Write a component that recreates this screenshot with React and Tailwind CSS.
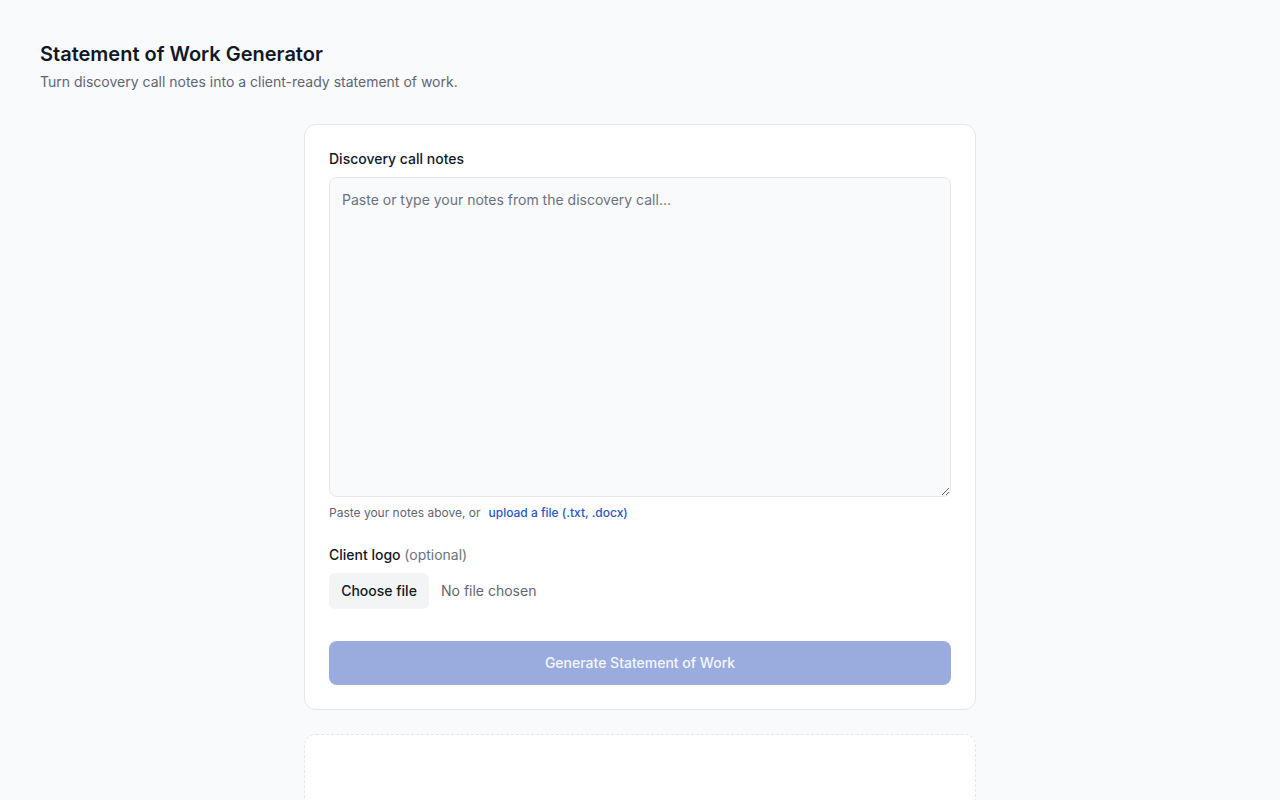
export default function App() {
  return (
    <div
      className="min-h-screen bg-[#f9fafc] px-10 pt-10 pb-10 text-[#111827]"
      style={{ fontFamily: "Inter, 'Noto Sans', sans-serif" }}
    >
      <header>
        <h1 className="text-xl font-semibold leading-7 text-[#111827]">Statement of Work Generator</h1>
        <p className="mt-1 text-sm leading-5 text-[#5f6673]">
          Turn discovery call notes into a client-ready statement of work.
        </p>
      </header>

      <main className="mx-auto mt-8 flex w-[672px] flex-col gap-6">
        <section className="rounded-xl border border-[#e5e7eb] bg-white p-6">
          <label className="block text-sm font-medium leading-5 text-[#111827]">Discovery call notes</label>
          <textarea
            className="mt-2 block h-80 w-full resize-y rounded-lg border border-[#e5e7eb] bg-[#f9fafc] px-3 py-3 text-sm leading-5 text-[#111827] placeholder:text-[#6b7280] outline-none"
            placeholder="Paste or type your notes from the discovery call..."
          />
          <p className="mt-2 text-xs leading-4 text-[#5f6673]">
            Paste your notes above, or
            <button className="ml-2 text-xs font-medium text-[#2a55c8]">upload a file (.txt, .docx)</button>
          </p>

          <label className="mt-6 block text-sm font-medium leading-5 text-[#111827]">
            Client logo <span className="font-normal text-[#6b7280]">(optional)</span>
          </label>
          <div className="mt-2 flex items-center gap-3">
            <span className="flex h-9 w-[100px] items-center justify-center rounded-md bg-[#f3f4f6] text-sm font-medium text-[#111827]">
              Choose file
            </span>
            <span className="text-sm text-[#5f6673]">No file chosen</span>
          </div>

          <button
            disabled
            className="mt-8 flex h-11 w-full items-center justify-center rounded-lg bg-[#99acdd] text-sm font-medium text-[#f3f6fd]"
          >
            Generate Statement of Work
          </button>
        </section>

        <section className="h-64 rounded-xl border border-dashed border-[#e5e7eb] bg-white" />
      </main>
    </div>
  );
}
